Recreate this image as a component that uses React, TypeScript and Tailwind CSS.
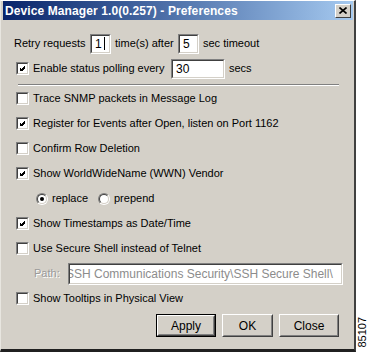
import React from "react";

const Sunken = ({ className = "", children }: { className?: string; children?: React.ReactNode }) => (
  <div className={`border border-t-[#808080] border-l-[#808080] border-b-white border-r-white ${className}`}>
    <div className="h-full w-full border border-t-[#404040] border-l-[#404040] border-b-[#d4d0c8] border-r-[#d4d0c8] bg-white flex items-center overflow-hidden">
      {children}
    </div>
  </div>
);

function CheckBox({ checked }: { checked?: boolean }) {
  return (
    <Sunken className="w-[13px] h-[13px] shrink-0">
      {checked && (
        <svg width="11" height="11" viewBox="1 1 11 11" shapeRendering="crispEdges">
          <rect x="3" y="5" width="1" height="3" fill="#000" />
          <rect x="4" y="6" width="1" height="3" fill="#000" />
          <rect x="5" y="7" width="1" height="3" fill="#000" />
          <rect x="6" y="6" width="1" height="3" fill="#000" />
          <rect x="7" y="5" width="1" height="3" fill="#000" />
          <rect x="8" y="4" width="1" height="3" fill="#000" />
          <rect x="9" y="3" width="1" height="3" fill="#000" />
        </svg>
      )}
    </Sunken>
  );
}

function Radio({ checked }: { checked?: boolean }) {
  return (
    <div className="w-[12px] h-[12px] shrink-0 rounded-full border border-t-[#808080] border-l-[#808080] border-b-white border-r-white">
      <div className="w-full h-full rounded-full border border-t-[#404040] border-l-[#404040] border-b-[#d4d0c8] border-r-[#d4d0c8] bg-white flex items-center justify-center">
        {checked && <div className="w-[4px] h-[4px] rounded-full bg-black" />}
      </div>
    </div>
  );
}

function CheckRow({ label, checked }: { label: string; checked?: boolean }) {
  return (
    <div className="h-[25px] flex items-center pl-[13px] gap-[4px]">
      <CheckBox checked={checked} />
      <span>{label}</span>
    </div>
  );
}

function Button({ label, width, isDefault }: { label: string; width: string; isDefault?: boolean }) {
  return (
    <div className={`${width} h-[23px] ${isDefault ? "border border-black" : ""}`}>
      <div className="h-full border border-t-white border-l-white border-b-[#404040] border-r-[#404040]">
        <div className="h-full border border-t-[#d4d0c8] border-l-[#d4d0c8] border-b-[#808080] border-r-[#808080] flex items-center justify-center text-[12px]">
          {label}
        </div>
      </div>
    </div>
  );
}

export default function App() {
  return (
    <div className="w-[369px] h-[352px] bg-white flex font-['Liberation_Sans',Arial,sans-serif] text-[11px] text-black">
      {/* Dialog window */}
      <div className="w-[356px] h-[352px] shrink-0 bg-[#d4d0c8] border-t border-l border-t-white border-l-[#e8e6e0] border-r-2 border-r-[#404040] border-b-[3px] border-b-[#202020] flex flex-col pl-[2px] pr-[1px]">
        {/* Title bar */}
        <div className="h-[19px] flex items-center justify-between bg-gradient-to-r from-[#0a246a] to-[#a6caf0] pl-[2px] pr-[2px]">
          <span className="text-white font-bold text-[12px] tracking-[0.1px]">Device Manager 1.0(0.257) - Preferences</span>
          <div className="w-[16px] h-[14px] border border-t-white border-l-white border-b-[#404040] border-r-[#404040] bg-[#d4d0c8] flex items-center justify-center">
            <svg width="8" height="7" viewBox="0 0 8 7">
              <path d="M0.5 0.5 L7.5 6.5 M7.5 0.5 L0.5 6.5" stroke="#000" strokeWidth="1.6" />
            </svg>
          </div>
        </div>

        {/* Retry requests */}
        <div className="mt-[11px] h-[25px] flex items-center pl-[11px]">
          <span className="w-[76px]">Retry requests</span>
          <Sunken className="w-[21px] h-[20px]">
            <span className="pl-[3px] text-[12px]">1</span>
            <span className="ml-[2px] w-[1px] h-[13px] bg-black" />
          </Sunken>
          <span className="ml-[4px] w-[63px]">time(s) after</span>
          <Sunken className="w-[21px] h-[20px]">
            <span className="pl-[3px] text-[12px]">5</span>
          </Sunken>
          <span className="ml-[4px]">sec timeout</span>
        </div>

        {/* Enable status polling */}
        <div className="h-[25px] flex items-center pl-[13px]">
          <CheckBox checked />
          <span className="ml-[4px] w-[138px]">Enable status polling every</span>
          <Sunken className="w-[54px] h-[20px]">
            <span className="pl-[3px] text-[12px]">30</span>
          </Sunken>
          <span className="ml-[4px]">secs</span>
        </div>

        {/* Separator */}
        <div className="mt-[3px] ml-[15px] w-[321px] border-t border-t-[#808080] border-b border-b-white" />

        <CheckRow label="Trace SNMP packets in Message Log" />
        <CheckRow label="Register for Events after Open, listen on Port 1162" checked />
        <CheckRow label="Confirm Row Deletion" />
        <CheckRow label="Show WorldWideName (WWN) Vendor" checked />

        {/* Radios */}
        <div className="h-[25px] flex items-center pl-[33px]">
          <Radio checked />
          <span className="ml-[4px] w-[46px]">replace</span>
          <Radio />
          <span className="ml-[4px]">prepend</span>
        </div>

        <CheckRow label="Show Timestamps as Date/Time" checked />
        <CheckRow label="Use Secure Shell instead of Telnet" />

        {/* Path */}
        <div className="h-[25px] flex items-center pl-[31px]">
          <span className="w-[34px] text-[#9a9a9a] [text-shadow:1px_1px_0_#fff]">Path:</span>
          <Sunken className="w-[275px] h-[22px]">
            <span className="ml-[-4px] whitespace-nowrap text-[12px] text-[#8c8c8c]">
              SSH Communications Security\SSH Secure Shell\
            </span>
          </Sunken>
        </div>

        <CheckRow label="Show Tooltips in Physical View" />

        {/* Buttons */}
        <div className="mt-[3px] flex justify-end gap-[6px] pr-[14px]">
          <Button label="Apply" width="w-[60px]" isDefault />
          <Button label="OK" width="w-[51px]" />
          <Button label="Close" width="w-[60px]" />
        </div>
      </div>

      {/* Figure number */}
      <div className="flex-1 flex items-end justify-center pb-[4px]">
        <span className="[writing-mode:vertical-rl] rotate-180 text-[11px] leading-none">85107</span>
      </div>
    </div>
  );
}
